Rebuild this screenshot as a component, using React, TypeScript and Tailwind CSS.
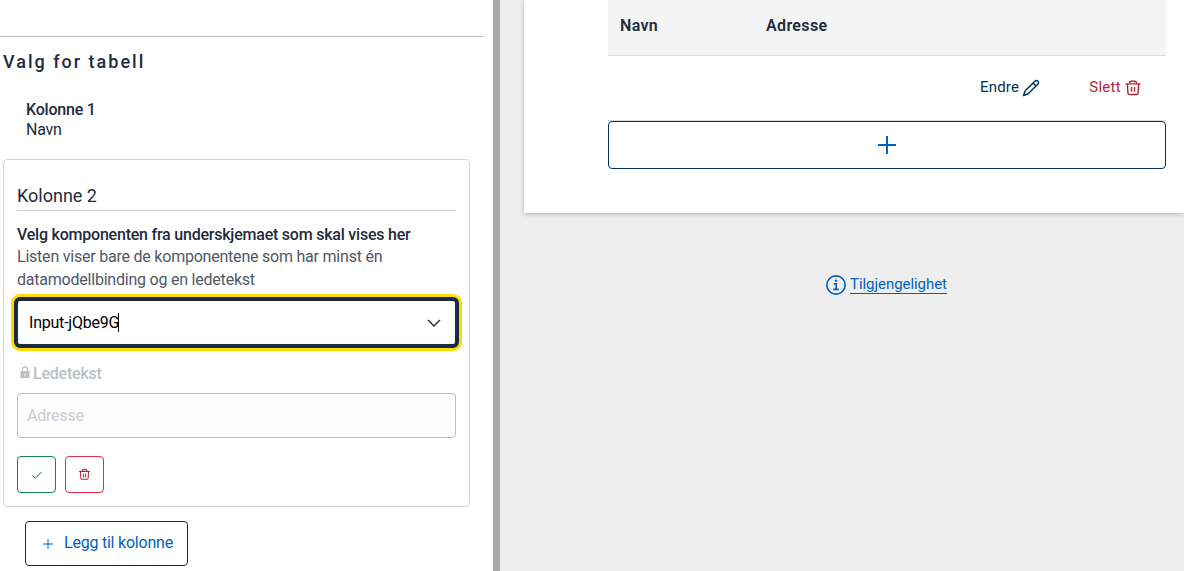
import React from "react";

const stroke = { fill: "none", stroke: "currentColor", strokeWidth: 1.5, viewBox: "0 0 24 24" } as const;

function Trash({ className }: { className: string }) {
  return (
    <svg {...stroke} strokeWidth={1.9} className={className}>
      <path d="M2 6.500h20M7.500 6.500V5a2 2 0 0 1 2-2h5a2 2 0 0 1 2 2V6.500M4.500 6.500l.75 12.500a2 2 0 0 0 2 1.750h9.500a2 2 0 0 0 2-1.750L19.500 6.500M10 10.500v6.500M14 10.500v6.500" />
    </svg>
  );
}

function Pencil({ className }: { className: string }) {
  return (
    <svg {...stroke} strokeWidth={1.8} className={className} strokeLinejoin="round">
      <path d="M16.900 3.600a2.100 2.100 0 0 1 3 0l.5.5a2.100 2.100 0 0 1 0 3L8.600 18.900 3 21l2.100-5.600zM14.500 6l3.500 3.500" />
    </svg>
  );
}

function Info({ className }: { className: string }) {
  return (
    <svg {...stroke} strokeWidth={1.8} className={className}>
      <circle cx="12" cy="12" r="10" />
      <path d="M9.500 10.750h2.750v6M9 16.750h6" />
      <circle cx="12" cy="7.250" r="1.300" fill="currentColor" stroke="none" />
    </svg>
  );
}

function Settings() {
  return (
    <section className="w-[493px] shrink-0 bg-white tracking-[-0.22px]">
      <div className="h-[37px] w-[484px] border-b border-[#bcc0cb]" />
      <h2 className="ml-[3px] mt-[13px] text-[18px] leading-6 font-medium tracking-[2px]">Valg for tabell</h2>
      <div className="ml-[26px] mt-[26px] leading-5">
        <div className="font-medium">Kolonne 1</div>
        <div>Navn</div>
      </div>
      <div className="ml-[3px] mt-[19px] h-[348px] w-[467px] rounded border border-[#d2d2d2] px-[13px] pt-[22px]">
        <h3 className="h-[29px] border-b border-[#d2d2d2] text-[18px] leading-7 tracking-normal">Kolonne 2</h3>
        <div className="mt-3 leading-[23px] font-medium">Velg komponenten fra underskjemaet som skal vises her</div>
        <p className="-mt-px w-[400px] leading-[23px] text-[#4f5965]">
          Listen viser bare de komponentene som har minst én datamodellbinding og en ledetekst
        </p>
        <div className="-mx-[3px] mt-[6px] flex h-[51px] items-center rounded-[6px] border-4 border-[#1a2b40] bg-white pl-[11px] pr-[12px] text-black shadow-[0_0_0_3px_#ffda06]">
          <span>Input-jQbe9G</span>
          <span className="-ml-px h-[19px] w-px bg-black" />
          <svg {...stroke} strokeWidth={1.8} className="ml-auto mt-px size-[18px] text-[#1e2b3c]">
            <path d="M4 8l8 8 8-8" />
          </svg>
        </div>
        <div className="mt-[14px] flex h-[23px] items-center text-[#bbbfc4]">
          <svg viewBox="0 0 10 12" className="mb-1 ml-[3px] mr-[3px] h-3 w-[10px]">
            <path d="M2.500 6V3.300a2.500 2.500 0 0 1 5 0V6" fill="none" stroke="currentColor" strokeWidth="1.200" />
            <path fillRule="evenodd" fill="currentColor" d="M1 5h8q.5 0 .5.500v6q0 .5-.5.500H1q-.5 0-.5-.5v-6Q.5 5 1 5zm3.500 2.500v2.200h1V7.500z" />
          </svg>
          <span className="font-medium">Ledetekst</span>
        </div>
        <div className="mt-2 h-[45px] rounded border border-[#b4bfcd] bg-[#fdfdfd] px-[9px] leading-[43px] text-[#c9ccd0]">Adresse</div>
        <div className="mt-[18px] flex gap-[9px]">
          <button className="flex h-[37px] w-[39px] items-center justify-center rounded border border-[#118849] text-[#0c6536]">
            <svg {...stroke} strokeWidth={1.9} className="size-[12px]">
              <path d="M3 13l5.500 5.500L21 6" />
            </svg>
          </button>
          <button className="flex h-[37px] w-[39px] items-center justify-center rounded border border-[#e02e49] text-[#b3253a]">
            <Trash className="size-[13px]" />
          </button>
        </div>
      </div>
      <button className="ml-[25px] mt-[14px] flex h-[45px] w-[163px] items-center rounded border border-[#00315d] pl-[15px] text-[#0062ba]">
        <svg {...stroke} strokeWidth={1.7} className="mr-[9px] mt-px size-[14px]">
          <path d="M12 3.500v17M3.500 12h17" />
        </svg>
        <span className="pb-[2px]">Legg til kolonne</span>
      </button>
    </section>
  );
}

function Preview() {
  return (
    <section className="min-w-0 flex-1 bg-[#eeeeee] pl-6">
      <div className="h-[213px] bg-white pl-[84px] pr-[18px] shadow-[0_1px_4px_rgba(0,0,0,0.25)]">
        <div className="grid h-14 grid-cols-[146px_1fr] border-b border-[#dcdee0] bg-[#f4f4f4] pl-3 leading-[51px] font-semibold tracking-[0.35px]">
          <span>Navn</span>
          <span>Adresse</span>
        </div>
        <div className="flex h-[65px] items-center justify-end border-b border-[#dcdee0] pr-[24px] text-[15px]">
          <span className="pb-[2px] tracking-[0.2px] text-[#003261]">Endre</span>
          <Pencil className="ml-[2px] size-5 text-[#003261]" />
          <span className="ml-[48px] pb-[2px] tracking-[0.3px] text-[#b3253a]">Slett</span>
          <Trash className="ml-[3px] size-[18px] text-[#b3253a]" />
        </div>
        <button className="flex h-12 w-full items-center justify-center rounded border border-[#00315d] text-[#0062ba]">
          <svg {...stroke} strokeWidth={2} className="size-6">
            <path d="M12 3v18M3 12h18" />
          </svg>
        </button>
      </div>
      <div className="mt-[60px] flex h-6 items-center pl-[301px] text-[#0062ba]">
        <Info className="size-[22px]" />
        <span className="-mt-[3px] ml-[3px] h-[21px] border-b border-[#0062ba] text-[15px] leading-[23px] tracking-[-0.05px]">Tilgjengelighet</span>
      </div>
    </section>
  );
}

export default function App() {
  return (
    <main className="flex h-[571px] w-[1184px] overflow-hidden font-[Roboto,sans-serif] text-[16px] text-[#1e2b3c]">
      <Settings />
      <div className="w-[7px] shrink-0 bg-[#a8a8a8]" />
      <Preview />
    </main>
  );
}
